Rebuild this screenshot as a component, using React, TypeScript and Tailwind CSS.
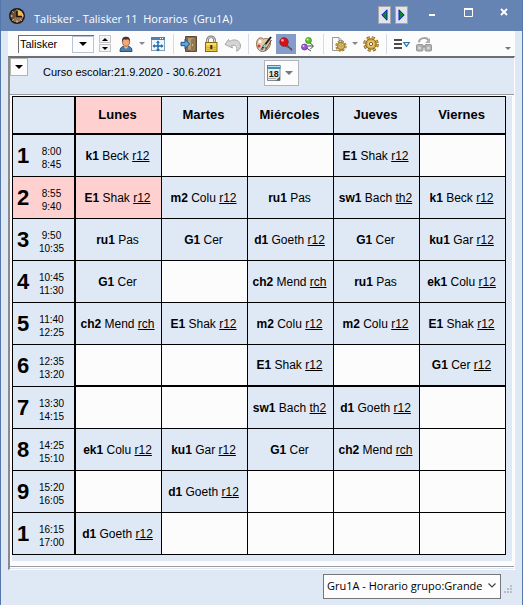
import React from "react";

type Lesson = [string, string, string?];

interface Period {
  label: string;
  from: string;
  to: string;
  lessons: (Lesson | null)[];
}

const days = ["Lunes", "Martes", "Miércoles", "Jueves", "Viernes"];

const periods: Period[] = [
  { label: "1", from: "8:00", to: "8:45", lessons: [["k1", "Beck", "r12"], null, null, ["E1", "Shak", "r12"], null] },
  { label: "2", from: "8:55", to: "9:40", lessons: [["E1", "Shak", "r12"], ["m2", "Colu", "r12"], ["ru1", "Pas"], ["sw1", "Bach", "th2"], ["k1", "Beck", "r12"]] },
  { label: "3", from: "9:50", to: "10:35", lessons: [["ru1", "Pas"], ["G1", "Cer"], ["d1", "Goeth", "r12"], ["G1", "Cer"], ["ku1", "Gar", "r12"]] },
  { label: "4", from: "10:45", to: "11:30", lessons: [["G1", "Cer"], null, ["ch2", "Mend", "rch"], ["ru1", "Pas"], ["ek1", "Colu", "r12"]] },
  { label: "5", from: "11:40", to: "12:25", lessons: [["ch2", "Mend", "rch"], ["E1", "Shak", "r12"], ["m2", "Colu", "r12"], ["m2", "Colu", "r12"], ["E1", "Shak", "r12"]] },
  { label: "6", from: "12:35", to: "13:20", lessons: [null, null, ["E1", "Shak", "r12"], null, ["G1", "Cer", "r12"]] },
  { label: "7", from: "13:30", to: "14:15", lessons: [null, null, ["sw1", "Bach", "th2"], ["d1", "Goeth", "r12"], null] },
  { label: "8", from: "14:25", to: "15:10", lessons: [["ek1", "Colu", "r12"], ["ku1", "Gar", "r12"], ["G1", "Cer"], ["ch2", "Mend", "rch"], null] },
  { label: "9", from: "15:20", to: "16:05", lessons: [null, ["d1", "Goeth", "r12"], null, null, null] },
  { label: "1", from: "16:15", to: "17:00", lessons: [["d1", "Goeth", "r12"], null, null, null, null] },
];

const ClockIcon = () => (
  <svg width="18" height="18" viewBox="0 0 18 18" className="shrink-0">
    <circle cx="9" cy="9" r="8" fill="#1d1a19" />
    <circle cx="9" cy="9" r="6.3" fill="#6b5138" />
    <path d="M9 9V2.7A6.3 6.3 0 0 1 15.3 9Z" fill="#f0b75c" />
    <path d="M9 9H15.3A6.3 6.3 0 0 1 4 12.8Z" fill="#9a7049" />
    <path d="M9 2.5v2M15.5 9h-2M9 15.5v-2M2.5 9h2M4.5 4.5l1 1M13.5 13.5l-1-1M4.5 13.5l1-1" stroke="#f6e3c4" />
    <path d="M9 3.5V9.5H14" fill="none" stroke="#111" strokeWidth="1.6" />
  </svg>
);

const PersonIcon = () => (
  <svg width="18" height="18" viewBox="0 0 18 18">
    <path d="M3 16.5c0-4 2-5.5 6-5.5s6 1.5 6 5.5Z" fill="#4a7fb0" stroke="#2c4f78" />
    <path d="M7 10.5h4v1.5l-2 2-2-2Z" fill="#f3c08e" />
    <ellipse cx="9" cy="7" rx="3.5" ry="4.2" fill="#f4a878" stroke="#8a5a34" strokeWidth=".8" />
    <path d="M5 7C4.6 3 6.3 1.8 9 1.8S13.4 3 13 7c-.5-1.8-1.2-2.5-2-2.7-1.5.5-3 .4-4 0C6.1 5 5.5 5.8 5 7Z" fill="#4a3226" />
  </svg>
);

const FitWindowIcon = () => (
  <svg width="18" height="18" viewBox="0 0 18 18">
    <rect x="2.5" y="2.5" width="13" height="13" fill="#eef5fb" stroke="#7f9fbe" />
    <path d="M2 2h14v3H2Z" fill="#4b83b8" />
    <path d="M11 3.5h1M13 3.5h1" stroke="#fff" />
    <path d="M9 7v8M5 11h8" stroke="#1d65a4" strokeWidth="1.4" />
    <path d="M9 5.5l2 2.2H7ZM9 16.5l2-2.2H7ZM3.5 11l2.2-2v4ZM14.5 11l-2.2-2v4Z" fill="#1d65a4" />
  </svg>
);

const DoorIcon = () => (
  <svg width="18" height="18" viewBox="0 0 18 18">
    <path d="M5.5 1.5h11v15h-11Z" fill="#7d6a56" stroke="#5b4a3a" />
    <path d="M8 3h6.500v12.500L8 14.500Z" fill="#b79b72" />
    <path d="M14.500 3L11 4.500v12l3.500-1Z" fill="#94764f" />
    <path d="M1 7.300h4V4.300L9.500 9 5 13.700v-3H1Z" fill="#5ea5dc" stroke="#1c4f80" />
    <circle cx="12.600" cy="10" r=".8" fill="#f7dc86" />
  </svg>
);

const LockIcon = () => (
  <svg width="18" height="18" viewBox="0 0 18 18">
    <path d="M5.500 8V5a3.500 3.200 0 0 1 7 0V8" fill="none" stroke="#6f6f6f" strokeWidth="2.600" />
    <path d="M5.500 8V5a3.500 3.200 0 0 1 7 0V8" fill="none" stroke="#dcdcdc" />
    <rect x="3.500" y="7.500" width="11.500" height="9" fill="#f0cc45" stroke="#8a6a10" />
    <path d="M4.500 9h9.500" stroke="#fff19a" />
    <path d="M4.500 12.500h9.500M4.500 14.500h9.500" stroke="#d3a93a" />
    <path d="M8.300 10h2v4h-2Z" fill="#2f2a1c" />
  </svg>
);

const UndoIcon = () => (
  <svg width="18" height="18" viewBox="0 0 18 18">
    <path d="M1 9.500L4.500 4.500 5.500 6.500C10.500 3 16.500 5.500 16.500 11 16.500 13.500 15 15.500 12.500 16.200 13.800 12.500 12 9.500 7.500 10.500l1 2.500Z" fill="#d4d4d4" stroke="#a8a8a8" />
  </svg>
);

const PaletteIcon = () => (
  <svg width="18" height="18" viewBox="0 0 18 18">
    <path d="M2 6C3 2 7 2.500 8.500 4 10.500 3 15 3 15.500 7c.5 5-4 9.500-8 9.500C3 16.500.5 11 2 6Z" fill="#e4c7a4" stroke="#8d6d50" />
    <circle cx="5" cy="6.500" r="1.500" fill="#fff" />
    <circle cx="4" cy="11" r="1.500" fill="#d23b34" />
    <circle cx="7" cy="14" r="1.300" fill="#3b78c8" />
    <circle cx="11" cy="13" r="1.300" fill="#4ba64a" />
    <path d="M7.500 13L16 2" stroke="#222" strokeWidth="2" />
    <path d="M8.500 12l2-2.600" stroke="#9fe1e6" strokeWidth="1.500" />
    <path d="M10 16l6.500-11" stroke="#6a5444" />
  </svg>
);

const PinIcon = () => (
  <svg width="18" height="18" viewBox="0 0 18 18">
    <path d="M9 9l6 6.500" stroke="#555" strokeWidth="1.300" />
    <path d="M8 11l7 3" stroke="#8c3a3a" />
    <circle cx="7" cy="7" r="4.300" fill="#d4121a" stroke="#8f0a10" strokeWidth=".6" />
    <circle cx="5.500" cy="5.300" r="1.400" fill="#ff9d9d" />
  </svg>
);

const PinsIcon = () => (
  <svg width="18" height="18" viewBox="0 0 18 18">
    <path d="M10 7l4 3.500M6 12l6 4M9 11h5.500l-3 3" fill="none" stroke="#444" />
    <circle cx="9.500" cy="5.500" r="3" fill="#5fc32a" stroke="#35821a" strokeWidth=".7" />
    <circle cx="8.500" cy="4.500" r="1" fill="#d9f8c3" />
    <circle cx="5.500" cy="12" r="3" fill="#9a52d6" stroke="#5e2792" strokeWidth=".7" />
    <circle cx="4.500" cy="11" r="1" fill="#e8d2fa" />
  </svg>
);

const GearShape = () => (
  <>
    <circle cx="9" cy="9" r="6.300" fill="none" stroke="#7a5c17" strokeWidth="3" strokeDasharray="2.900 2.048" />
    <circle cx="9" cy="9" r="6.200" fill="none" stroke="#d8ae48" strokeWidth="1.800" strokeDasharray="2.300 2.569" strokeDashoffset="-.3" />
    <circle cx="9" cy="9" r="5.200" fill="#d0a94a" stroke="#8a6a1e" />
    <circle cx="9" cy="9" r="3.200" fill="#ecd07c" />
    <circle cx="9" cy="9" r="1.700" fill="#fff" stroke="#7a5c17" />
  </>
);

const GearIcon = () => (
  <svg width="18" height="18" viewBox="0 0 18 18">
    <GearShape />
  </svg>
);

const PageGearIcon = () => (
  <svg width="18" height="18" viewBox="0 0 18 18">
    <path d="M2.500 15.500v-13H9l3 3v10Z" fill="#fafafa" stroke="#9a9a9a" />
    <path d="M9 2.500v3h3" fill="none" stroke="#9a9a9a" />
    <g transform="translate(4.500 4.500) scale(.72)">
      <GearShape />
    </g>
  </svg>
);

const FilterListIcon = () => (
  <svg width="18" height="18" viewBox="0 0 18 18">
    <path d="M1 5h8M1 9h8M1 13h8" stroke="#4d4a50" strokeWidth="2" />
    <path d="M10.800 7.500h5.400L13.500 11.500Z" fill="#d8effa" stroke="#2b76ac" strokeWidth="1.200" />
  </svg>
);

const BinocularsIcon = () => (
  <svg width="18" height="18" viewBox="0 0 18 18">
    <path d="M4 7.500C4 2.500 12 1.500 13.500 5.500" fill="none" stroke="#a4a4a4" strokeWidth="2" />
    <path d="M15 3v5h-5Z" fill="#b0b0b0" />
    <rect x="1.500" y="9.500" width="6.500" height="6.500" rx="1" fill="#b4b4b4" stroke="#979797" />
    <rect x="10" y="9.500" width="6.500" height="6.500" rx="1" fill="#b4b4b4" stroke="#979797" />
    <path d="M7.500 11.500h3" stroke="#979797" strokeWidth="2" />
    <path d="M3.500 13h2M12.500 13h2" stroke="#e4e4e4" strokeWidth="2" />
  </svg>
);

const CalendarIcon = () => (
  <svg width="14" height="18" viewBox="0 0 14 18">
    <path d="M.5 1.500h12.500v15H.5Z" fill="#eceeea" stroke="#7d8b93" />
    <path d="M0 1h13.500v4H0Z" fill="#3f8db5" />
    <path d="M1 2.500h12" stroke="#b9e2f5" />
    <text x="6.700" y="12.800" fontSize="9" fontWeight="700" textAnchor="middle" fill="#222" fontFamily="Liberation Sans, sans-serif">18</text>
    <path d="M1 14.500h8" stroke="#a9b0b4" />
    <path d="M9 16.500L13 12.500v4Z" fill="#555" />
  </svg>
);

const Arrow = ({ className, size = 8 }: { className?: string; size?: number }) => (
  <svg width={size} height={size / 2} viewBox="0 0 8 4" className={className}>
    <path d="M0 0H8L4 4Z" fill="currentColor" />
  </svg>
);

const ToolButton = ({ label, active, children }: { label: string; active?: boolean; children: React.ReactNode }) => (
  <button
    type="button"
    aria-label={label}
    aria-pressed={active}
    className={`flex h-5 w-5 shrink-0 items-center justify-center ${active ? "bg-[#829dc9]" : ""}`}
  >
    {children}
  </button>
);

const MenuButton = ({ label }: { label: string }) => (
  <button type="button" aria-label={label} className="flex h-5 w-3 shrink-0 items-center justify-center text-[#85858c]">
    <Arrow size={6} />
  </button>
);

const Divider = () => <span className="h-5 w-px shrink-0 bg-[#d5dbe6]" />;

const TitleBar = () => (
  <header className="flex h-[31px] items-center bg-[#6583b3] pl-[7px] text-white">
    <ClockIcon />
    <h1 className="ml-2 mt-2 whitespace-pre font-['Open_Sans',sans-serif] text-[11px]">
      Talisker - Talisker 11  Horarios  (Gru1A)
    </h1>
    <div className="ml-auto flex items-start self-start pt-[6px]">
      <button type="button" aria-label="Anterior" className="flex h-[18px] w-[13px] items-center justify-center border border-[#a5a5a8] bg-[#dfe4ee]">
        <svg width="7" height="12" viewBox="0 0 7 12">
          <path d="M6 .8V11.200L.8 6Z" fill="#0a8a1c" stroke="#0b12d8" />
        </svg>
      </button>
      <button type="button" aria-label="Siguiente" className="ml-1 flex h-[18px] w-[13px] items-center justify-center border border-[#a5a5a8] bg-[#dfe4ee]">
        <svg width="7" height="12" viewBox="0 0 7 12">
          <path d="M1 .8V11.200L6.200 6Z" fill="#0a8a1c" stroke="#0b12d8" />
        </svg>
      </button>
      <button type="button" aria-label="Minimizar" className="ml-4 flex h-3 w-4 items-end justify-center">
        <svg width="6" height="6" viewBox="0 0 6 6">
          <path d="M0 3h6" stroke="#fff" strokeWidth="2" />
        </svg>
      </button>
      <button type="button" aria-label="Maximizar" className="ml-5 flex h-3 w-4 items-center justify-center">
        <svg width="9" height="9" viewBox="0 0 9 9">
          <path d="M.5 1h8v7.500H.5Z" fill="none" stroke="#fff" />
          <path d="M0 1h9" stroke="#fff" strokeWidth="2" />
        </svg>
      </button>
      <button type="button" aria-label="Cerrar" className="ml-5 mr-[10px] flex h-3 w-4 items-center justify-center">
        <svg width="8" height="8" viewBox="0 0 8 8">
          <path d="M1 1l6 6M7 1L1 7" stroke="#fff" strokeWidth="1.800" />
        </svg>
      </button>
    </div>
  </header>
);

const Toolbar = () => (
  <div className="flex h-[25px] items-center bg-[#fcfcfd] pl-[10px]">
    <div className="flex h-[18px] w-[76px] shrink-0 border-l border-t border-[#6d6d6d]">
      <input
        aria-label="Elemento"
        defaultValue="Talisker"
        className="min-w-0 flex-1 bg-white px-px text-[11px] text-black outline-none"
      />
      <button type="button" aria-label="Abrir lista" className="flex w-[22px] items-center justify-center border border-[#b9c3d6] bg-[#fdfdfd] text-black">
        <Arrow />
      </button>
    </div>
    <div className="ml-[5px] flex w-3 shrink-0 flex-col gap-px">
      <button type="button" aria-label="Subir" className="flex h-2 items-center justify-center border border-[#c4c4c8] bg-[#f4f4f6] text-black">
        <Arrow size={6} className="rotate-180" />
      </button>
      <button type="button" aria-label="Bajar" className="flex h-2 items-center justify-center border border-[#c4c4c8] bg-[#f4f4f6] text-black">
        <Arrow size={6} />
      </button>
    </div>
    <div className="mx-[5px] flex items-center">
      <ToolButton label="Persona"><PersonIcon /></ToolButton>
      <MenuButton label="Opciones de persona" />
      <ToolButton label="Ajustar ventana"><FitWindowIcon /></ToolButton>
    </div>
    <Divider />
    <div className="mx-[5px] flex items-center gap-[2px]">
      <ToolButton label="Salir"><DoorIcon /></ToolButton>
      <ToolButton label="Bloquear"><LockIcon /></ToolButton>
      <ToolButton label="Deshacer"><UndoIcon /></ToolButton>
    </div>
    <Divider />
    <div className="mx-[5px] flex items-center gap-[2px]">
      <ToolButton label="Colores"><PaletteIcon /></ToolButton>
      <ToolButton label="Fijar" active><PinIcon /></ToolButton>
      <ToolButton label="Fijaciones"><PinsIcon /></ToolButton>
    </div>
    <Divider />
    <div className="mx-[5px] flex items-center">
      <ToolButton label="Formato de página"><PageGearIcon /></ToolButton>
      <MenuButton label="Opciones de página" />
      <ToolButton label="Parámetros"><GearIcon /></ToolButton>
    </div>
    <Divider />
    <div className="mx-[5px] flex items-center gap-[2px]">
      <ToolButton label="Filtrar lista"><FilterListIcon /></ToolButton>
      <ToolButton label="Buscar"><BinocularsIcon /></ToolButton>
    </div>
    <button type="button" aria-label="Más botones" className="ml-auto mr-1 flex h-full items-end pb-[6px] text-[#77777c]">
      <Arrow size={6} />
    </button>
  </div>
);

const Timetable = () => (
  <table className="w-full table-fixed border-separate border-spacing-0 border-l border-t border-black bg-[#fcfcfd] text-xs text-black">
    <thead>
      <tr className="h-[38px]">
        <th className="w-[63px] border-b-2 border-r-2 border-black bg-[#dfe8f5] p-0" />
        {days.map((day, i) => (
          <th
            key={day}
            scope="col"
            className={`border-b-2 border-r border-black p-0 pr-[2px] text-[13px] font-bold ${i === 0 ? "bg-[#ffd0d0]" : "bg-[#dfe8f5]"}`}
          >
            {day}
          </th>
        ))}
      </tr>
    </thead>
    <tbody>
      {periods.map((period, row) => {
        // the break after period 6 is drawn as a thick line
        const line = row === 5 ? "border-b-2" : "border-b";
        return (
          <tr key={row} className="h-[42px]">
            <th
              scope="row"
              className={`border-b border-r-2 border-black p-0 font-normal ${row === 1 ? "bg-[#ffd0d0]" : "bg-[#dfe8f5]"}`}
            >
              <div className="flex items-center pr-1">
                <span className="w-5 text-[22px] leading-6 font-bold">{period.label}</span>
                <span className="flex-1 pt-1 text-center text-[10px] leading-[13px]">
                  {period.from}
                  <br />
                  {period.to}
                </span>
              </div>
            </th>
            {period.lessons.map((lesson, col) => {
              const fill = !lesson ? "" : row === 1 && col === 0 ? "bg-[#ffd0d0]" : "bg-[#dfe8f5]";
              return (
                <td key={col} className={`${line} ${fill} whitespace-nowrap border-r border-black p-0 pr-[2px] text-center`}>
                  {lesson && (
                    <>
                      <b>{lesson[0]}</b> {lesson[1]} {lesson[2] && <u>{lesson[2]}</u>}
                    </>
                  )}
                </td>
              );
            })}
          </tr>
        );
      })}
    </tbody>
  </table>
);

export default function App() {
  return (
    <div className="flex min-h-screen flex-col border border-t-0 border-[#5476ab] bg-[#dfe8f5] font-['Liberation_Sans',Arial,sans-serif]">
      <TitleBar />
      <main className="mx-[7px] flex flex-col">
        <Toolbar />
        <section className="border-b border-l-2 border-r border-t-2 border-b-white border-l-[#8a8a8e] border-r-white border-t-[#6e6e72]">
          <div className="flex h-[36px] items-start">
            <button type="button" aria-label="Desplegar" className="flex h-[18px] w-[18px] items-center justify-center border border-[#b4b4b8] bg-[#fcfcfd] text-black">
              <Arrow />
            </button>
            <p className="ml-[15px] mt-[6px] text-[11px] leading-4">Curso escolar:21.9.2020 - 30.6.2021</p>
            <button type="button" aria-label="Calendario" className="ml-[42px] mt-[2px] flex h-[26px] w-[35px] items-center justify-between border border-[#b4b4b8] bg-[#fcfcfd] pl-[2px] pr-[5px] text-[#77777c]">
              <CalendarIcon />
              <Arrow />
            </button>
          </div>
          <div className="border-t border-[#9a9a9e] bg-[#fcfcfd] pb-[5px] pl-[2px] pr-[2px] pt-px">
            <div className="bg-[#dfe8f5] pb-[6px] pr-[6px]">
              <Timetable />
            </div>
          </div>
          <div className="border-b border-t border-b-[#dfe8f5] border-t-[#9a9a9e] bg-white pt-px" />
        </section>
      </main>
      <footer className="flex items-end justify-end pb-2 pr-[10px] pt-[3px]">
        <div className="relative">
          <select
            aria-label="Formato de horario"
            className="h-[25px] w-[178px] appearance-none border border-[#767679] bg-[#fcfcfd] pl-[3px] pr-[18px] font-['Open_Sans',sans-serif] text-[11px] text-black"
          >
            <option>Gru1A - Horario grupo:Grande</option>
          </select>
          <svg width="8" height="5" viewBox="0 0 8 5" className="pointer-events-none absolute right-[5px] top-[10px]">
            <path d="M.5.5L4 4 7.500.5" fill="none" stroke="#444" strokeWidth="1.200" />
          </svg>
        </div>
        <svg width="8" height="8" viewBox="0 0 8 8" className="mb-[6px] ml-[3px]">
          <path d="M6 0h2v2H6ZM6 3h2v2H6ZM3 3h2v2H3ZM0 6h2v2H0ZM3 6h2v2H3ZM6 6h2v2H6Z" fill="#bdbdc0" />
        </svg>
      </footer>
    </div>
  );
}
